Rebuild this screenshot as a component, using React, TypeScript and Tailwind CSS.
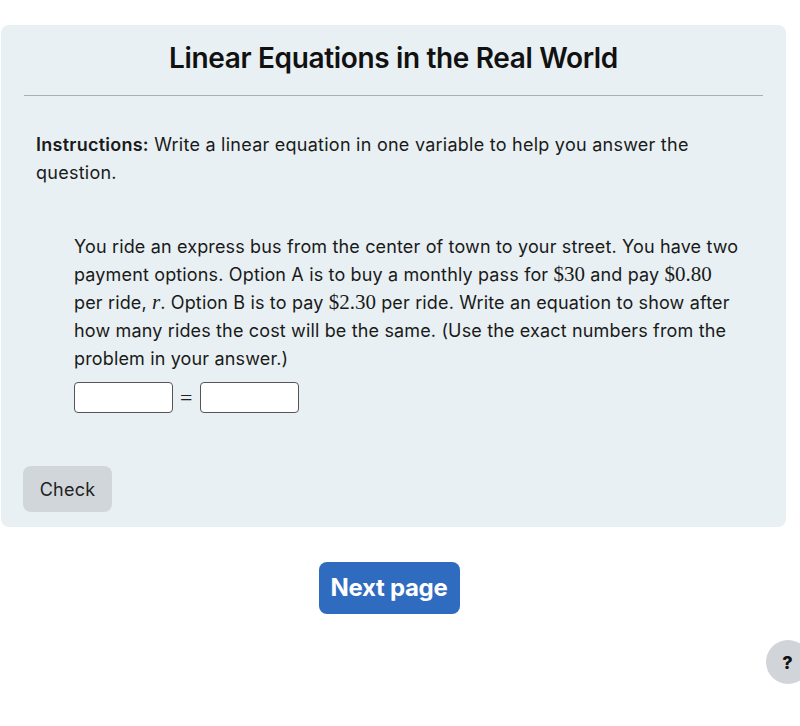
import React from "react";

const M = ({ children }: { children: React.ReactNode }) => (
  <span className="text-[21px] leading-[0] tracking-normal" style={{ fontFamily: '"Liberation Serif","Times New Roman",serif' }}>
    {children}
  </span>
);

export default function App() {
  return (
    <div className="w-[800px] h-[726px] bg-white relative overflow-hidden text-[#1a1a1a]" style={{ fontFamily: 'Inter, "Noto Sans", sans-serif' }}>
      <div className="pt-[25px] pl-[1px] pr-[14px]">
        <div className="bg-[#e8f0f3] rounded-[8px] pb-[15px]">
          <h1 className="text-center font-semibold text-[28px] tracking-[-0.35px] text-[#111] pt-[16px] h-[70px] leading-[34px]">
            Linear Equations in the Real World
          </h1>
          <div className="mx-[23px] h-[1px] bg-[#a9b0b3]" />
          <p className="px-[35px] pt-[35px] text-[18px] leading-[28px] tracking-[0.25px]">
            <b className="font-semibold">Instructions:</b> Write a linear equation in one variable to help you answer the question.
          </p>
          <div className="pl-[73px] pr-[46px] pt-[46px] text-[18px] leading-[28px] tracking-[0.15px]">
            <p>
              You ride an express bus from the center of town to your street. You have two payment options. Option A is to buy a monthly pass for <M>$30</M> and pay <M>$0.80</M> per ride, <M><i>r</i></M>. Option B is to pay <M>$2.30</M> per ride. Write an equation to show after how many rides the cost will be the same. (Use the exact numbers from the problem in your answer.)
            </p>
            <div className="flex items-center gap-[7px] mt-[9px]">
              <div className="w-[99px] h-[31px] bg-white border border-[#555] rounded-[4px]" />
              <span className="text-[22px] leading-none text-[#222]" style={{ fontFamily: '"Liberation Serif", serif' }}>=</span>
              <div className="w-[99px] h-[31px] bg-white border border-[#555] rounded-[4px]" />
            </div>
          </div>
          <div className="pl-[22px] pt-[53px]">
            <button className="bg-[#d1d6da] rounded-[8px] w-[89px] h-[46px] text-[18px] text-[#222] tracking-[0.2px]">Check</button>
          </div>
        </div>
      </div>
      <div className="flex justify-center pt-[35px] pr-[22px]">
        <button className="bg-[#2f6bbf] text-white font-bold text-[24px] rounded-[8px] w-[141px] h-[52px] tracking-[-0.3px]">
          Next page
        </button>
      </div>
      <div className="absolute left-[766px] top-[640px] w-[44px] h-[44px] rounded-full bg-[#d1d5d9] flex items-center justify-center">
        <span className="font-extrabold text-[18px] text-[#111] pr-[1px]">?</span>
      </div>
    </div>
  );
}
